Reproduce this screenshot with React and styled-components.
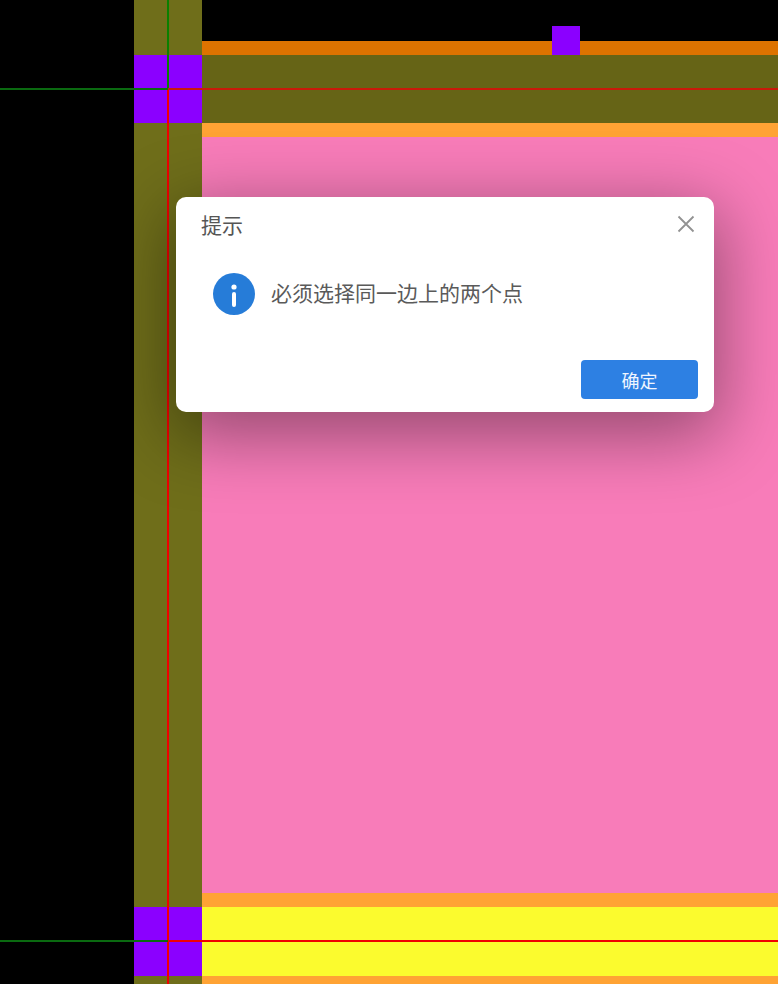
import React from "react";
import styled, { createGlobalStyle } from "styled-components";

const Global = createGlobalStyle`
  html, body { margin: 0; padding: 0; background: #000; }
  body { font-family: "Noto Sans CJK SC", "Liberation Sans", sans-serif; }
`;

const Stage = styled.div`
  position: relative;
  width: 778px;
  height: 984px;
  overflow: hidden;
  display: grid;
  grid-template-columns: 134px 68px 1fr;
  grid-template-rows: 41px 14px 68px 14px 756px 14px 69px 8px;
  background: #000;
`;

const Post = styled.div`
  grid-column: 2;
  grid-row: ${(p) => p.$row};
  background: ${(p) => (p.$joint ? "#8b00ff" : "#6f6e1a")};
`;

const Band = styled.div`
  grid-column: 3;
  grid-row: ${(p) => p.$row};
  background: ${(p) => p.$color};
`;

const Handle = styled.div`
  position: absolute;
  left: 552px;
  top: 26px;
  width: 28px;
  height: 29px;
  background: #8b00ff;
`;

const VLine = styled.div`
  position: absolute;
  left: 167px;
  top: ${(p) => p.$top}px;
  width: 2px;
  height: ${(p) => p.$height}px;
  background: ${(p) => p.$color};
`;

const HLine = styled.div`
  position: absolute;
  top: ${(p) => p.$top}px;
  left: ${(p) => p.$left}px;
  width: ${(p) => p.$width}px;
  height: 2px;
  background: ${(p) => p.$color};
`;

const Dialog = styled.div`
  position: absolute;
  left: 176px;
  top: 197px;
  width: 538px;
  height: 215px;
  box-sizing: border-box;
  display: flex;
  flex-direction: column;
  background: #fff;
  border-radius: 10px;
  box-shadow: 0 18px 70px 6px rgba(0, 0, 0, 0.4);
  padding: 0 16px 13px 25px;
`;

const Header = styled.div`
  display: flex;
  align-items: center;
  justify-content: space-between;
  height: 54px;
`;

const Title = styled.div`
  font-size: 21px;
  line-height: 54px;
  color: #555;
`;

const Close = styled.button`
  display: flex;
  padding: 0;
  margin-right: 3px;
  border: 0;
  background: none;
  color: #929292;
`;

const Body = styled.div`
  display: flex;
  align-items: flex-start;
  gap: 16px;
  flex: 1;
  padding: 22px 0 0 12px;
`;

const Message = styled.div`
  font-size: 21px;
  line-height: 38px;
  color: #5a5a5a;
`;

const Footer = styled.div`
  display: flex;
  justify-content: flex-end;
`;

const Confirm = styled.button`
  width: 117px;
  height: 39px;
  padding: 0;
  border: 0;
  border-radius: 4px;
  background: #2d80e3;
  color: #eef5ff;
  font-family: inherit;
  font-size: 18px;
`;

const InfoIcon = () => (
  <svg width="42" height="42" viewBox="0 0 42 42">
    <circle cx="21" cy="21" r="21" fill="#267cd8" />
    <circle cx="21" cy="14" r="2.6" fill="#fff" />
    <rect x="19" y="19" width="4" height="15" rx="2" fill="#fff" />
  </svg>
);

const CloseIcon = () => (
  <svg width="18" height="18" viewBox="0 0 18 18" fill="none" stroke="currentColor" strokeWidth="1.8">
    <path d="M1.5 1.5 16.5 16.5M16.5 1.5 1.5 16.5" />
  </svg>
);

export default function App() {
  return (
    <Stage>
      <Global />
      <Post $row="1 / 3" />
      <Post $row="3" $joint />
      <Post $row="4 / 7" />
      <Post $row="7" $joint />
      <Post $row="8" />
      <Band $row="2" $color="#dd7300" />
      <Band $row="3" $color="#666416" />
      <Band $row="4" $color="#ffa334" />
      <Band $row="5" $color="#f87cb9" />
      <Band $row="6" $color="#ffa334" />
      <Band $row="7" $color="#fbfb2e" />
      <Band $row="8" $color="#ffa334" />
      <Handle />
      <VLine $top={0} $height={89} $color="#0a8000" />
      <VLine $top={89} $height={895} $color="#f00000" />
      <HLine $top={88} $left={0} $width={168} $color="#0a6a10" />
      <HLine $top={88} $left={168} $width={610} $color="#c81a0a" />
      <HLine $top={940} $left={0} $width={168} $color="#0a6a10" />
      <HLine $top={940} $left={168} $width={610} $color="#f00000" />
      <Dialog>
        <Header>
          <Title>提示</Title>
          <Close aria-label="关闭"><CloseIcon /></Close>
        </Header>
        <Body>
          <InfoIcon />
          <Message>必须选择同一边上的两个点</Message>
        </Body>
        <Footer>
          <Confirm>确定</Confirm>
        </Footer>
      </Dialog>
    </Stage>
  );
}
